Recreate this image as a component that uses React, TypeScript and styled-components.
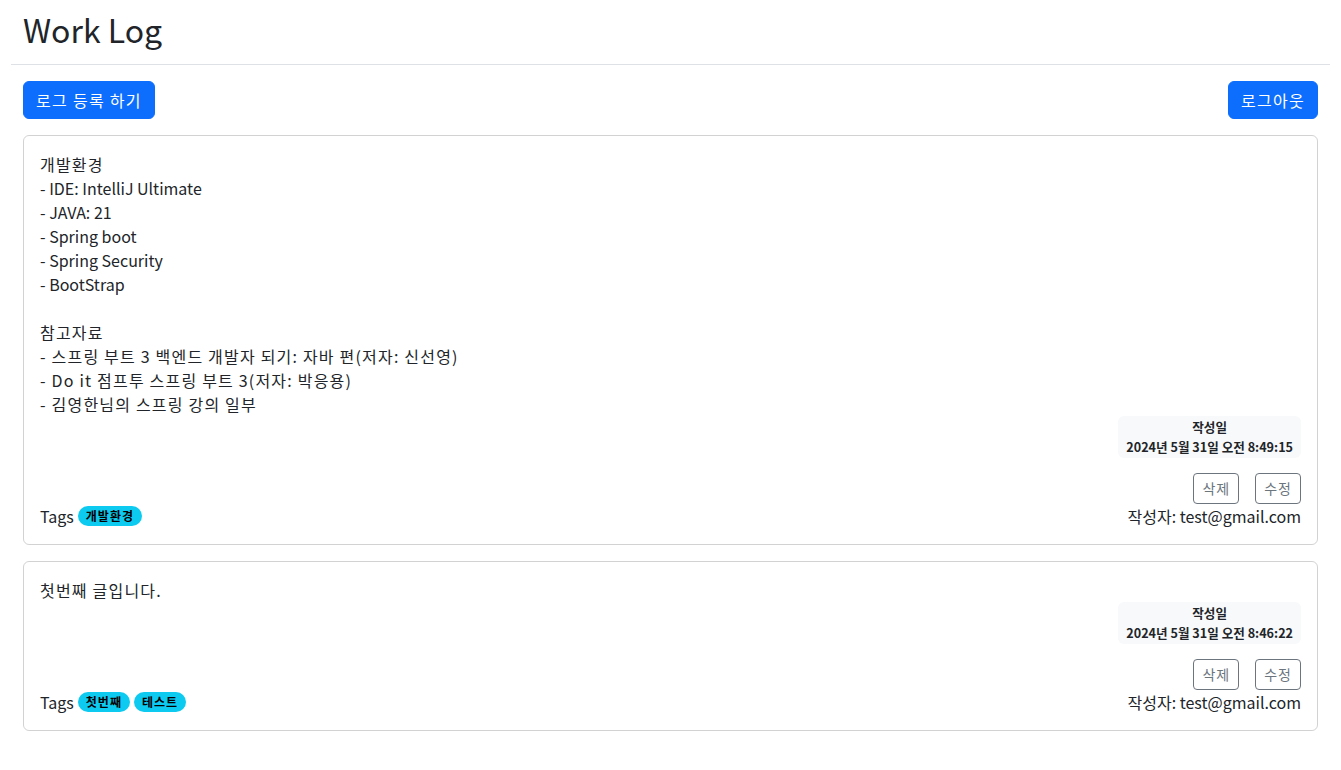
import React from "react";
import styled, { createGlobalStyle } from "styled-components";

const GlobalStyle = createGlobalStyle`
  * { box-sizing: border-box; }
  body {
    margin: 0;
    background: #fff;
    color: #212529;
    font-family: "Noto Sans CJK KR", "Noto Sans", sans-serif;
    font-size: 16px;
    line-height: 1.5;
  }
`;

const hasHangul = (s: string) => /[\uAC00-\uD7A3]/.test(s);

const Page = styled.div`
  padding: 0 11px;
`;

const Header = styled.header`
  padding: 10px 12px 16px;
  border-bottom: 1px solid #dee2e6;
`;

const Title = styled.h1`
  margin: 0;
  font-size: 32px;
  font-weight: 400;
  line-height: 1.2;
`;

const Main = styled.main`
  padding: 16px 12px;
  display: flex;
  flex-direction: column;
  gap: 16px;
`;

const Toolbar = styled.div`
  display: flex;
  justify-content: space-between;
  align-items: center;
`;

const PrimaryButton = styled.button`
  font-family: inherit;
  font-size: 16px;
  line-height: 24px;
  padding: 6px 12px;
  border: 1px solid #0d6efd;
  border-radius: 6px;
  background: #0d6efd;
  color: #fff;
  letter-spacing: 1.3px;
  cursor: pointer;
`;

const Card = styled.article`
  border: 1px solid rgba(0, 0, 0, 0.175);
  border-radius: 6px;
  padding: 16px;
  display: flex;
  flex-direction: column;
`;

const Content = styled.div`
  display: flex;
  flex-direction: column;
`;

const Line = styled.div<{ $korean: boolean }>`
  min-height: 24px;
  line-height: 24px;
  white-space: pre;
  letter-spacing: ${(p) => (p.$korean ? "1.2px" : "0")};
`;

const Footer = styled.div`
  display: flex;
  justify-content: space-between;
  align-items: flex-end;
`;

const TagRow = styled.div`
  display: flex;
  align-items: center;
  gap: 4px;
  height: 24px;
`;

const Badge = styled.span`
  display: inline-block;
  background: #0dcaf0;
  color: #000;
  font-size: 12px;
  font-weight: 700;
  line-height: 1;
  padding: 4px 8px;
  letter-spacing: 1px;
  border-radius: 50rem;
`;

const Meta = styled.div`
  display: flex;
  flex-direction: column;
  align-items: flex-end;
`;

const DateBox = styled.div`
  background: #f8f9fa;
  border-radius: 6px;
  padding: 1px 8px 2px;
  font-size: 12.6px;
  font-weight: 700;
  line-height: 19.5px;
  text-align: center;
`;

const ActionRow = styled.div`
  display: flex;
  gap: 16px;
  margin-top: 15px;
`;

const OutlineButton = styled.button`
  font-family: inherit;
  font-size: 14px;
  line-height: 21px;
  padding: 4px 8px;
  border: 1px solid #6c757d;
  border-radius: 4px;
  background: transparent;
  color: #6c757d;
  letter-spacing: 1px;
  cursor: pointer;
`;

const Author = styled.div`
  line-height: 24px;
`;

type Log = {
  content: string;
  date: string;
  tags: string[];
  author: string;
};

const logs: Log[] = [
  {
    content:
      "개발환경\n- IDE: IntelliJ Ultimate\n- JAVA: 21\n- Spring boot\n- Spring Security\n- BootStrap\n\n참고자료\n- 스프링 부트 3 백엔드 개발자 되기: 자바 편(저자: 신선영)\n- Do it 점프투 스프링 부트 3(저자: 박응용)\n- 김영한님의 스프링 강의 일부",
    date: "2024년 5월 31일 오전 8:49:15",
    tags: ["개발환경"],
    author: "test@gmail.com",
  },
  {
    content: "첫번째 글입니다.",
    date: "2024년 5월 31일 오전 8:46:22",
    tags: ["첫번째", "테스트"],
    author: "test@gmail.com",
  },
];

function LogCard({ log }: { log: Log }) {
  return (
    <Card>
      <Content>
        {log.content.split("\n").map((line, i) => (
          <Line key={i} $korean={hasHangul(line)}>
            {line}
          </Line>
        ))}
      </Content>
      <Footer>
        <TagRow>
          <span>Tags</span>
          {log.tags.map((t) => (
            <Badge key={t}>{t}</Badge>
          ))}
        </TagRow>
        <Meta>
          <DateBox>
            <div>작성일</div>
            <div>{log.date}</div>
          </DateBox>
          <ActionRow>
            <OutlineButton>삭제</OutlineButton>
            <OutlineButton>수정</OutlineButton>
          </ActionRow>
          <Author>작성자: {log.author}</Author>
        </Meta>
      </Footer>
    </Card>
  );
}

export default function App() {
  return (
    <Page>
      <GlobalStyle />
      <Header>
        <Title>Work Log</Title>
      </Header>
      <Main>
        <Toolbar>
          <PrimaryButton>로그 등록 하기</PrimaryButton>
          <PrimaryButton>로그아웃</PrimaryButton>
        </Toolbar>
        {logs.map((log, i) => (
          <LogCard key={i} log={log} />
        ))}
      </Main>
    </Page>
  );
}
